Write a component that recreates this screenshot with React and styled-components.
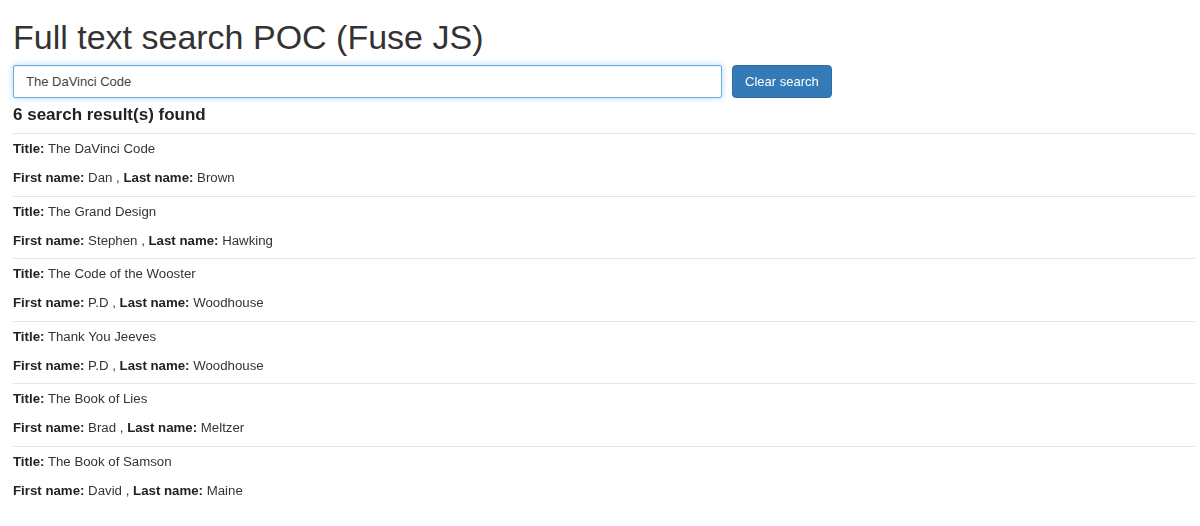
import React from "react";
import styled, { createGlobalStyle } from "styled-components";

const GlobalStyle = createGlobalStyle`
  html, body {
    margin: 0;
    padding: 0;
    background: #ffffff;
  }
  body {
    font-family: "Liberation Sans", Arial, Helvetica, sans-serif;
    color: #333333;
  }
`;

const Page = styled.div`
  padding: 0 5px 0 13px;
`;

const Heading = styled.h1`
  margin: 0;
  padding-top: 15px;
  font-size: 34px;
  font-weight: 400;
  line-height: 44px;
  color: #333;
`;

const SearchBar = styled.div`
  display: flex;
  align-items: center;
  gap: 10px;
  margin-top: 6px;
`;

const SearchInput = styled.input`
  box-sizing: border-box;
  width: 709px;
  height: 33px;
  padding: 0 12px;
  font-family: inherit;
  font-size: 13px;
  color: #444;
  border: 1px solid #66afe9;
  border-radius: 2px;
  outline: none;
  caret-color: #222;
  box-shadow: inset 0 1px 1px rgba(0, 0, 0, 0.075), 0 0 6px rgba(102, 175, 233, 0.5);
`;

const Button = styled.button`
  box-sizing: border-box;
  height: 33px;
  padding: 0 12px;
  font-family: inherit;
  font-size: 13px;
  color: #fff;
  background: #337ab7;
  border: 1px solid #2e6da4;
  border-radius: 4px;
  cursor: pointer;
`;

const Count = styled.h4`
  margin: 7px 0 0;
  font-size: 17px;
  font-weight: 700;
  line-height: 20px;
  color: #222;
`;

const Results = styled.div`
  margin-top: 8px;
`;

const Result = styled.div`
  border-top: 1px solid #e6e6e6;
  padding: 5px 0 7.5px;
`;

const Line = styled.p`
  margin: 0;
  font-size: 13.25px;
  line-height: 20px;
  color: #333;

  & + & {
    margin-top: 9px;
  }
`;

const Label = styled.b`
  font-weight: 700;
  color: #222;
`;

const books = [
  { title: "The DaVinci Code", first: "Dan", last: "Brown" },
  { title: "The Grand Design", first: "Stephen", last: "Hawking" },
  { title: "The Code of the Wooster", first: "P.D", last: "Woodhouse" },
  { title: "Thank You Jeeves", first: "P.D", last: "Woodhouse" },
  { title: "The Book of Lies", first: "Brad", last: "Meltzer" },
  { title: "The Book of Samson", first: "David", last: "Maine" },
];

export default function App() {
  return (
    <Page>
      <GlobalStyle />
      <Heading>Full text search POC (Fuse JS)</Heading>
      <SearchBar>
        <SearchInput defaultValue="The DaVinci Code" autoFocus />
        <Button>Clear search</Button>
      </SearchBar>
      <Count>{books.length} search result(s) found</Count>
      <Results>
        {books.map((b) => (
          <Result key={b.title}>
            <Line>
              <Label>Title:</Label> {b.title}
            </Line>
            <Line>
              <Label>First name:</Label> {b.first} , <Label>Last name:</Label> {b.last}
            </Line>
          </Result>
        ))}
      </Results>
    </Page>
  );
}
